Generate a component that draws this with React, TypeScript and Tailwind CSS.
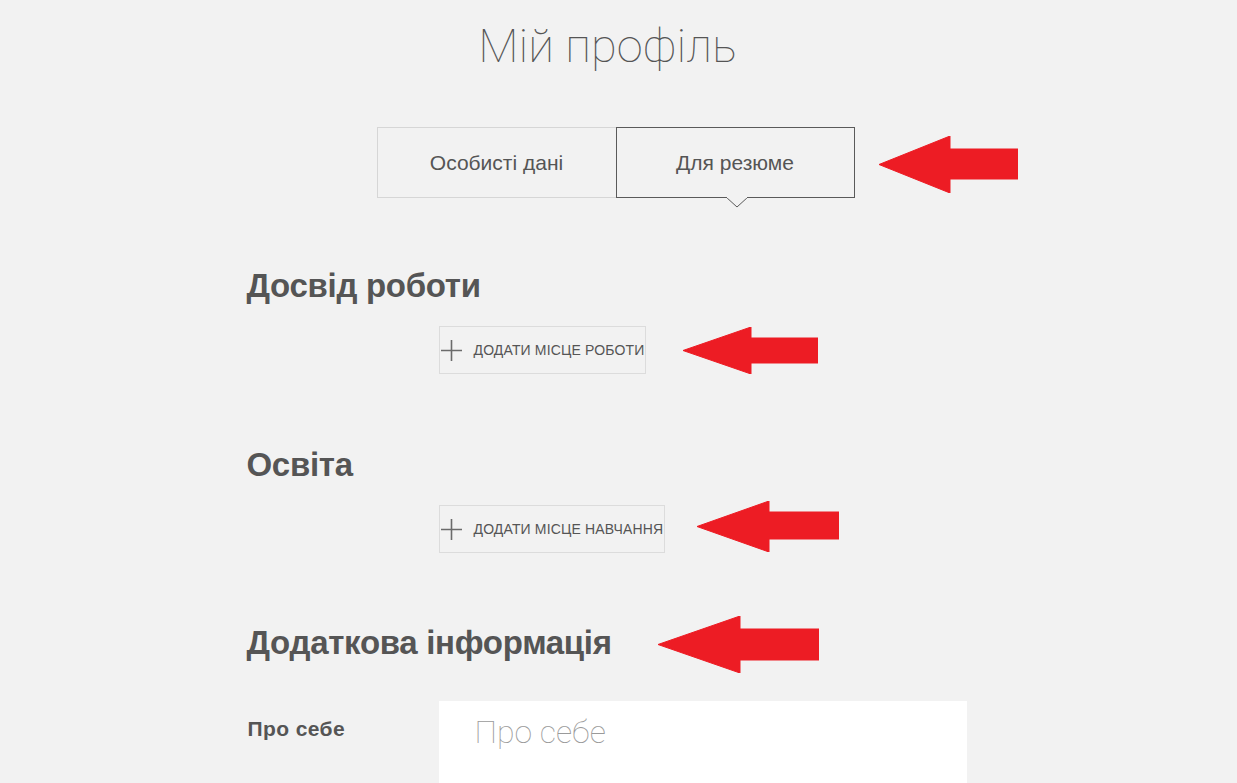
type ArrowProps = {
  left: number;
  top: number;
  w: number;
  h: number;
  head: number;
  shaftTop: number;
  shaftBottom: number;
};

// red annotation arrow pointing left
function Arrow({ left, top, w, h, head, shaftTop, shaftBottom }: ArrowProps) {
  const points = [
    [0, h / 2],
    [head, 0],
    [head, shaftTop],
    [w, shaftTop],
    [w, shaftBottom],
    [head, shaftBottom],
    [head, h],
  ]
    .map((p) => p.join(","))
    .join(" ");
  return (
    <svg
      className="pointer-events-none absolute"
      style={{ left, top }}
      width={w}
      height={h}
      viewBox={`0 0 ${w} ${h}`}
    >
      <polygon points={points} fill="#ed1c24" strokeLinejoin="round" stroke="#ed1c24" strokeWidth={1} />
    </svg>
  );
}

function AddButton({ label }: { label: string }) {
  return (
    <button
      type="button"
      className="flex h-[48px] items-center border border-[#dcdcdc] pl-[1px] pr-[1px] text-[14px] uppercase tracking-[0.15px] text-[#555] [font-family:'Liberation_Sans',Arial,sans-serif]"
    >
      <svg width="21" height="21" viewBox="0 0 21 21">
        <path d="M10.5 0V21M0 10.5H21" stroke="#6b6b6b" strokeWidth="1.6" />
      </svg>
      <span className="ml-[12px]">{label}</span>
    </button>
  );
}

function SectionTitle({ children, className }: { children: string; className?: string }) {
  return (
    <h2
      className={
        "text-[33px] font-bold leading-[33px] tracking-[-0.3px] text-[#555] [font-family:'Liberation_Sans',Arial,sans-serif] " +
        (className ?? "")
      }
    >
      {children}
    </h2>
  );
}

export default function App() {
  return (
    <div className="relative h-[783px] w-full overflow-hidden bg-[#f2f2f2]">
      <div className="mx-auto w-[744px]">
        <h1 className="mt-[22px] pr-[22px] text-center text-[47px] font-thin leading-[48px] text-[#555] [font-family:Roboto,'Liberation_Sans',sans-serif]">
          Мій профіль
        </h1>

        <div className="mt-[57px] flex pl-[130px] text-[21px] text-[#555] [font-family:'Liberation_Sans',Arial,sans-serif]">
          <div className="flex h-[71px] w-[239px] items-center justify-center border border-r-0 border-[#d6d6d6]">
            Особисті дані
          </div>
          <div className="relative flex h-[71px] w-[239px] items-center justify-center border border-[#5a5a5a]">
            Для резюме
            <svg className="absolute left-[109px] top-[69px]" width="22" height="12" viewBox="0 0 22 12">
              <polygon points="0,0 11,10 22,0" fill="#f2f2f2" stroke="#5a5a5a" strokeWidth="1" />
              <line x1="1" y1="0.5" x2="21" y2="0.5" stroke="#f2f2f2" strokeWidth="1.2" />
            </svg>
          </div>
        </div>

        <SectionTitle className="mt-[71px]">Досвід роботи</SectionTitle>
        <div className="mt-[24px] flex pl-[192px]">
          <AddButton label="Додати місце роботи" />
        </div>

        <SectionTitle className="mt-[74px]">Освіта</SectionTitle>
        <div className="mt-[24px] flex pl-[192px]">
          <AddButton label="Додати місце навчання" />
        </div>

        <SectionTitle className="mt-[73px]">Додаткова інформація</SectionTitle>

        <div className="mt-[42px] flex">
          <label className="w-[192px] pl-[1px] pt-[17px] text-[21px] font-bold leading-[21px] tracking-[0.4px] text-[#555] [font-family:'Liberation_Sans',Arial,sans-serif]">
            Про себе
          </label>
          <textarea
            placeholder="Про себе"
            className="h-[120px] w-[528px] resize-none bg-white px-[36px] pt-[15px] text-[32px] font-thin leading-[32px] text-[#555] outline-none placeholder:text-[#9a9a9a] [font-family:Roboto,'Liberation_Sans',sans-serif]"
          />
        </div>
      </div>

      <Arrow left={879} top={136} w={139} h={57} head={71} shaftTop={13} shaftBottom={43} />
      <Arrow left={683} top={327} w={135} h={47} head={68} shaftTop={11} shaftBottom={36} />
      <Arrow left={697} top={501} w={142} h={51} head={72} shaftTop={11} shaftBottom={38} />
      <Arrow left={658} top={616} w={161} h={57} head={82} shaftTop={13} shaftBottom={44} />
    </div>
  );
}
